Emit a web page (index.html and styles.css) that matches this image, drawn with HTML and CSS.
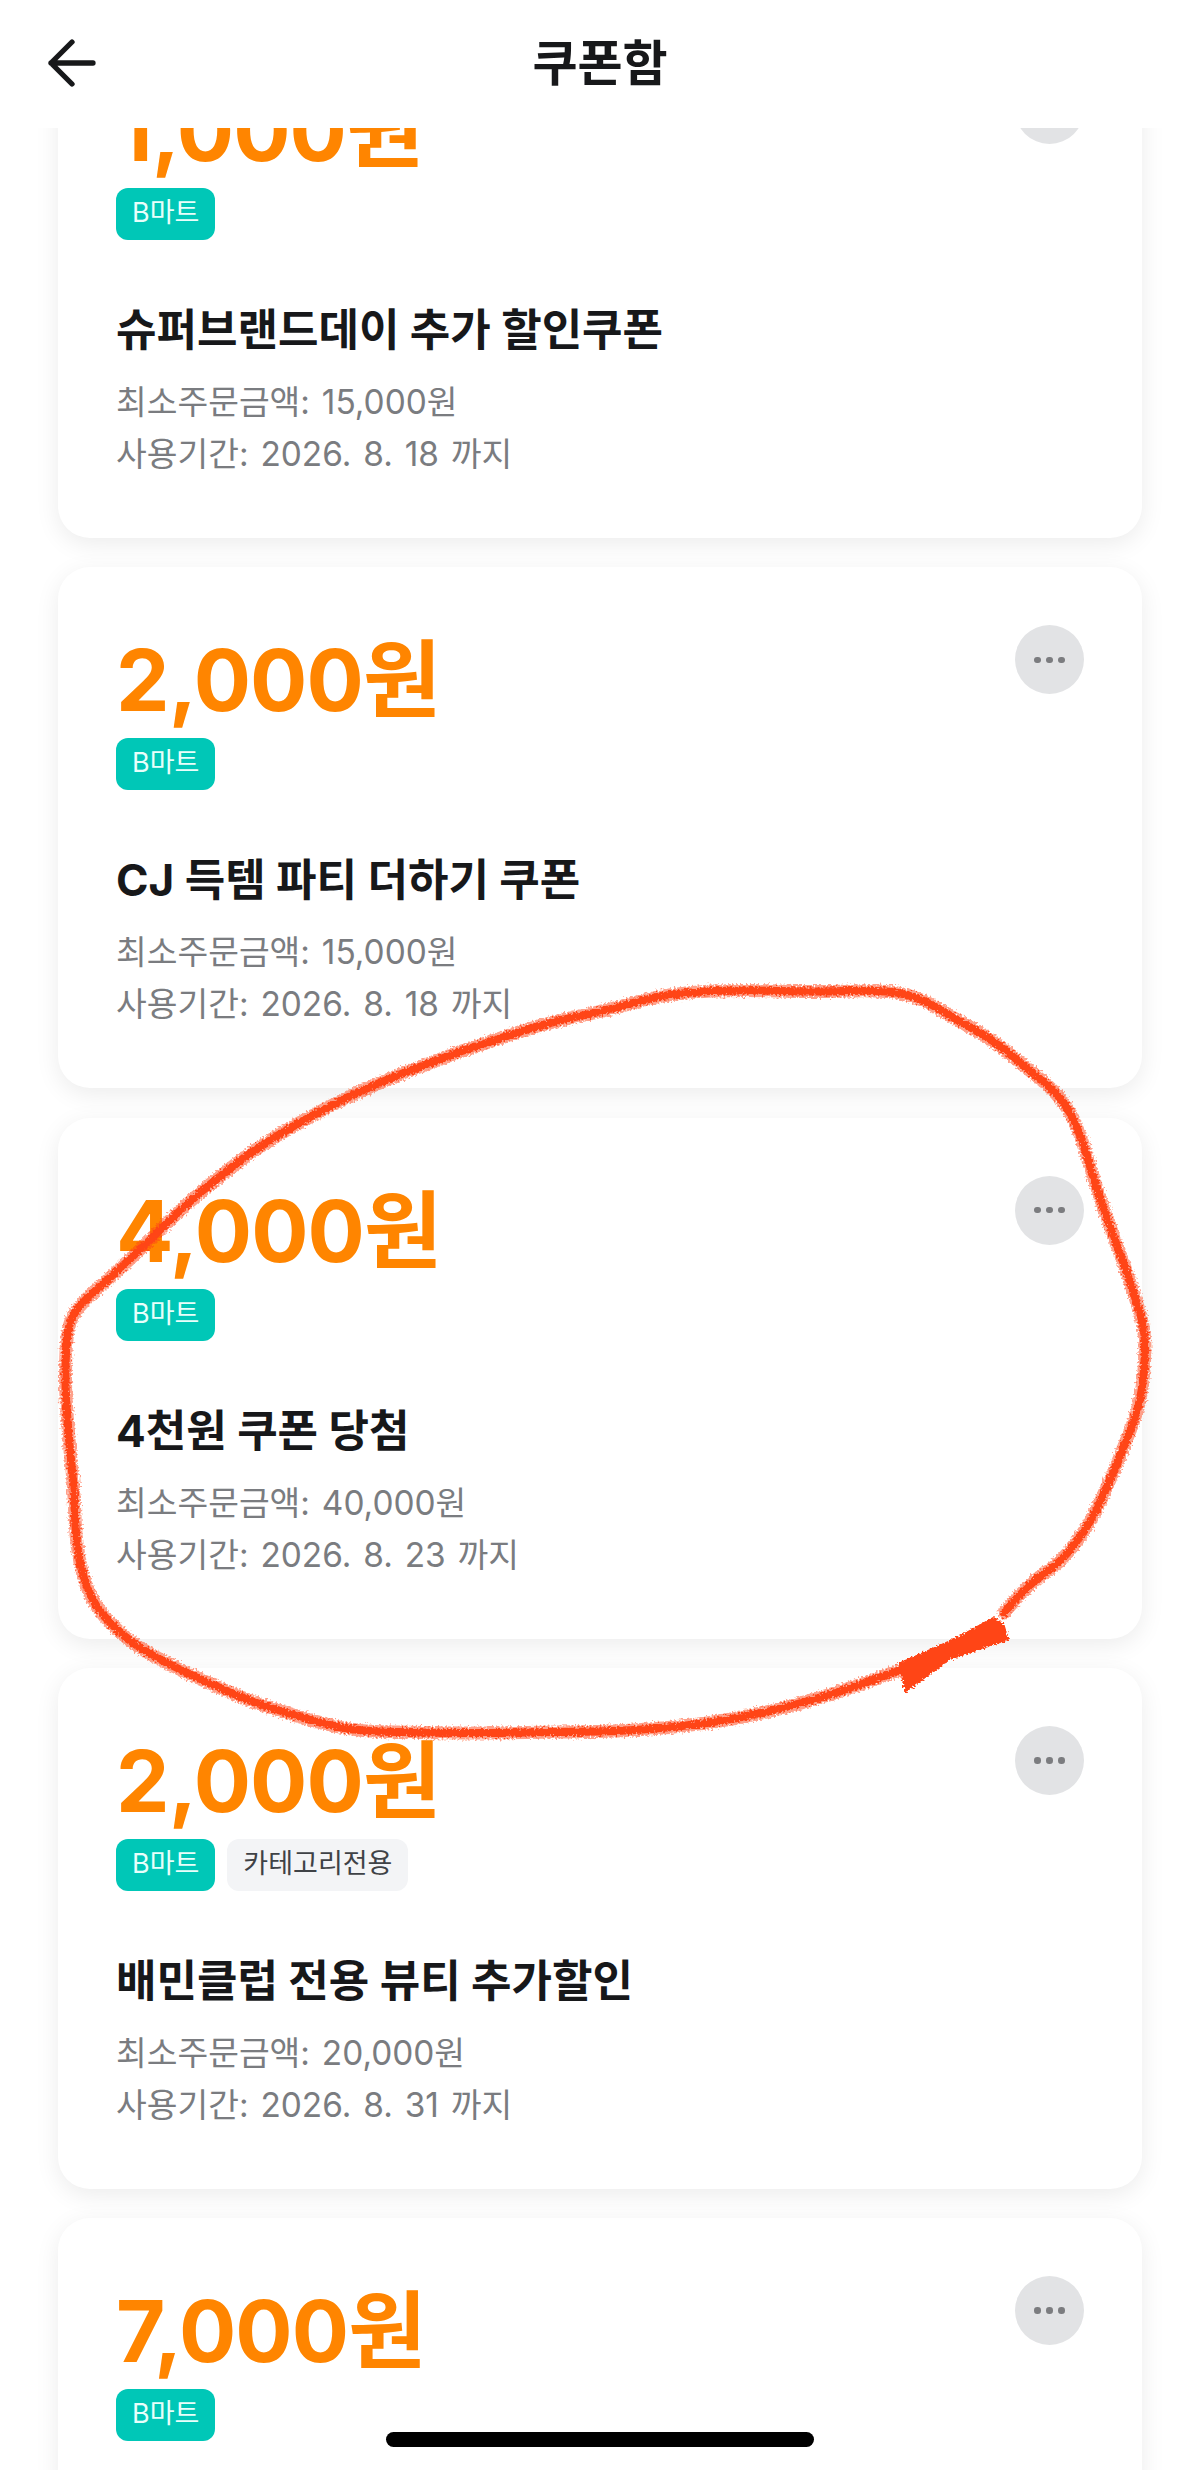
FILE: index.html
```html
<!DOCTYPE html>
<html lang="ko">
<head>
<meta charset="utf-8">
<title>쿠폰함</title>
<link rel="stylesheet" href="styles.css">
</head>
<body>
<div class="screen">
  <header class="topbar">
    <svg class="back" viewBox="0 0 50 50" width="50" height="50" aria-hidden="true"><path d="M24 3 3 24l21 21M3 24h42" fill="none" stroke="#17181a" stroke-width="5.3" stroke-linecap="round" stroke-linejoin="round"/></svg>
    <h1 class="topbar-title">쿠폰함</h1>
  </header>
  <main class="list">
    <article class="card">
      <div class="card-head"><div class="amount">1,000원</div><button class="more"><span></span><span></span><span></span></button></div>
      <div class="tags"><span class="tag tag-mart">B마트</span></div>
      <h2 class="name">슈퍼브랜드데이 추가 할인쿠폰</h2>
      <p class="meta">최소주문금액: 15,000원</p>
      <p class="meta">사용기간: 2026. 8. 18 까지</p>
    </article>
    <article class="card">
      <div class="card-head"><div class="amount">2,000원</div><button class="more"><span></span><span></span><span></span></button></div>
      <div class="tags"><span class="tag tag-mart">B마트</span></div>
      <h2 class="name">CJ 득템 파티 더하기 쿠폰</h2>
      <p class="meta">최소주문금액: 15,000원</p>
      <p class="meta">사용기간: 2026. 8. 18 까지</p>
    </article>
    <article class="card">
      <div class="card-head"><div class="amount">4,000원</div><button class="more"><span></span><span></span><span></span></button></div>
      <div class="tags"><span class="tag tag-mart">B마트</span></div>
      <h2 class="name">4천원 쿠폰 당첨</h2>
      <p class="meta">최소주문금액: 40,000원</p>
      <p class="meta">사용기간: 2026. 8. 23 까지</p>
    </article>
    <article class="card">
      <div class="card-head"><div class="amount">2,000원</div><button class="more"><span></span><span></span><span></span></button></div>
      <div class="tags"><span class="tag tag-mart">B마트</span><span class="tag tag-cat">카테고리전용</span></div>
      <h2 class="name">배민클럽 전용 뷰티 추가할인</h2>
      <p class="meta">최소주문금액: 20,000원</p>
      <p class="meta">사용기간: 2026. 8. 31 까지</p>
    </article>
    <article class="card">
      <div class="card-head"><div class="amount">7,000원</div><button class="more"><span></span><span></span><span></span></button></div>
      <div class="tags"><span class="tag tag-mart">B마트</span></div>
    </article>
  </main>
  <svg class="scribble" viewBox="0 0 1200 2470" width="1200" height="2470" aria-hidden="true">
    <defs>
      <filter id="rough" x="0" y="900" width="1200" height="900" filterUnits="userSpaceOnUse">
        <feTurbulence type="fractalNoise" baseFrequency="0.5" numOctaves="2" seed="4"/>
        <feDisplacementMap in="SourceGraphic" scale="7" xChannelSelector="R" yChannelSelector="G"/>
      </filter>
      <path id="stroke" d="M1004 1613Q1029 1583 1045 1573Q1061 1563 1077 1541Q1093 1520 1105 1491Q1118 1463 1128 1436Q1139 1410 1142 1388Q1145 1367 1145 1347Q1145 1327 1138 1307Q1132 1287 1123 1262Q1114 1237 1103 1207Q1093 1177 1086 1153Q1079 1130 1070 1113Q1061 1097 1045 1083Q1029 1070 1011 1055Q993 1040 975 1030Q957 1020 939 1009Q921 998 903 994Q886 990 850 991Q814 992 778 991Q743 990 711 991Q679 993 657 997Q636 1002 618 1007Q600 1012 570 1018Q540 1025 513 1034Q486 1043 459 1052Q433 1062 406 1072Q379 1083 352 1095Q326 1108 299 1123Q272 1138 245 1157Q219 1177 201 1192Q183 1207 165 1225Q147 1243 129 1260Q111 1277 95 1291Q79 1305 73 1316Q67 1327 66 1352Q65 1377 66 1397Q67 1417 70 1450Q74 1483 75 1516Q76 1550 83 1575Q90 1600 104 1616Q119 1633 136 1645Q154 1657 177 1668Q201 1680 227 1691Q254 1703 281 1711Q308 1720 334 1726Q361 1732 397 1732Q433 1733 468 1733Q504 1733 552 1732Q600 1732 635 1730Q671 1728 707 1723Q743 1718 778 1709Q814 1700 841 1691Q868 1682 900 1670"/>
    </defs>
    <g class="scribble-ink" filter="url(#rough)">
      <use href="#stroke" class="ink-soft"/>
      <use href="#stroke" class="ink-core"/>
      <path class="ink-blob" d="M898 1663 921 1653 957 1637 993 1617 1004 1623 1009 1640 950 1660 905 1693Z"/>
    </g>
  </svg>
  <div class="home-bar"></div>
</div>
</body>
</html>
```

FILE: styles.css
```css
* { box-sizing: border-box; }
html, body { margin: 0; padding: 0; background: #fff; }
body { font-family: Inter, "Noto Sans CJK KR", "Liberation Sans", sans-serif; }
.screen { position: relative; width: 1200px; height: 2470px; overflow: hidden; background: #fff; }
.topbar { position: absolute; left: 0; top: 0; z-index: 2; width: 100%; height: 128px; background: #fff; display: flex; align-items: center; justify-content: center; }
.back { position: absolute; left: 48px; top: 39px; }
.topbar-title { margin: 0; font-size: 49px; line-height: 60px; font-weight: 700; color: #17181a; }
.list { padding: 17px 58px 0; display: flex; flex-direction: column; gap: 29.25px; }
.card { height: 521px; flex: none; padding: 58px 58px 0; background: #fff; border-radius: 32px; box-shadow: 0 6px 24px rgba(0, 0, 0, .08); }
.card-head { display: flex; justify-content: space-between; align-items: flex-start; height: 102px; }
.amount { margin-top: 10px; font-size: 85px; line-height: 92px; font-weight: 700; color: #ff8500; letter-spacing: -.9px; }
.more { width: 69px; height: 69px; flex: none; padding: 0; border: 0; border-radius: 50%; background: #e2e3e5; display: flex; align-items: center; justify-content: center; gap: 5.5px; }
.more span { width: 6.5px; height: 6.5px; border-radius: 50%; background: #7b7c7f; }
.tags { display: flex; gap: 12px; height: 52px; margin-top: 11px; }
.tag { height: 52px; padding: 0 16px; border-radius: 12px; font-size: 27px; line-height: 50px; }
.tag-mart { background: #00c7b7; color: #e8fffb; }
.tag-cat { background: #f3f4f6; color: #3f4246; }
.name { margin: 62px 0 0; font-size: 44px; line-height: 56px; font-weight: 700; color: #17181a; }
.meta { margin: 0; font-size: 33.4px; line-height: 52px; word-spacing: 2.5px; color: #7a7c80; }
.name + .meta { margin-top: 18px; }
.scribble { position: absolute; left: 0; top: 0; z-index: 1; pointer-events: none; }
.ink-soft, .ink-core { fill: none; stroke: #ff4417; stroke-linecap: round; stroke-linejoin: round; }
.ink-soft { stroke-width: 13; opacity: .5; }
.ink-core { stroke-width: 8; }
.ink-blob { fill: #ff4417; }
.home-bar { position: absolute; left: 386px; top: 2432px; z-index: 3; width: 428px; height: 15px; border-radius: 8px; background: #000; }
```
